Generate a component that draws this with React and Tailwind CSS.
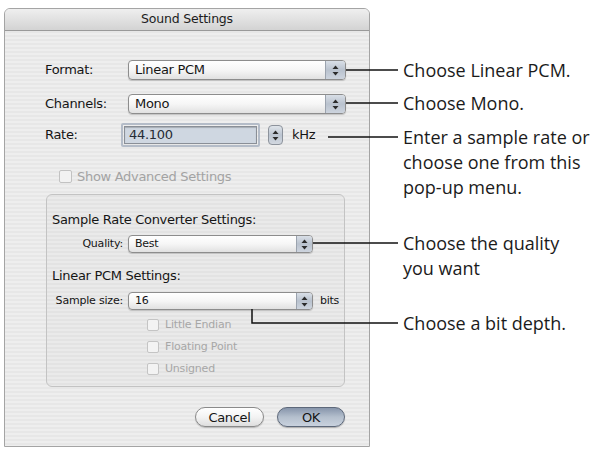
const dlgFont = { fontFamily: '"DejaVu Sans", "Liberation Sans", sans-serif' }

function Arrows({ size = "w-[7px] h-[11px]" }) {
  return (
    <svg viewBox="0 0 7 11" className={size}>
      <path d="M3.5 0.5 L6.5 4 L0.5 4 Z" fill="#2b2b2b" />
      <path d="M3.5 10.5 L6.5 7 L0.5 7 Z" fill="#2b2b2b" />
    </svg>
  )
}

function Popup({ value, className, stepW, textCls }) {
  return (
    <div
      className={`flex rounded-[4px] border border-[#8d8d8d] overflow-hidden bg-gradient-to-b from-white via-[#f6f6f6] to-[#e1e1e1] shadow-[0_1px_1px_rgba(0,0,0,0.18)] ${className}`}
    >
      <span className={`flex-1 flex items-center pl-[6px] text-[#151515] ${textCls}`}>{value}</span>
      <span
        className={`flex items-center justify-center border-l border-[#9ba3ae] bg-gradient-to-b from-[#d9dfe7] via-[#b9c2ce] to-[#cdd4de] ${stepW}`}
      >
        <Arrows />
      </span>
    </div>
  )
}

function DimCheck({ label }) {
  return (
    <div className="flex items-center gap-[6px]">
      <span className="w-[12px] h-[12px] rounded-[2px] border border-[#c4c4c4] bg-[#f3f3f3]" />
      <span className="text-[#a7a7a7] text-[11px] tracking-[-0.2px] leading-[14px]">{label}</span>
    </div>
  )
}

function Dialog() {
  return (
    <div
      style={dlgFont}
      className="ml-[4px] mt-[8px] w-[366px] h-[439px] flex flex-col border border-[#a4a4a4] rounded-t-[6px] overflow-hidden bg-[repeating-linear-gradient(180deg,#eeeeee_0px,#eeeeee_2px,#e7e7e7_2px,#e7e7e7_4px)]"
    >
      <div className="h-[22px] shrink-0 flex items-center justify-center border-b border-[#9a9a9a] bg-gradient-to-b from-[#efefef] to-[#d3d3d3] text-[12.5px] tracking-[-0.2px] text-[#1c1c1c]">
        Sound Settings
      </div>

      <div className="flex flex-col pl-[40px] pt-[29px] text-[13px] tracking-[-0.3px] text-[#151515]">
        <div className="flex items-center h-[20px]">
          <span className="w-[83px]">Format:</span>
          <Popup value="Linear PCM" className="w-[218px] h-[20px]" stepW="w-[20px]" textCls="text-[13px]" />
        </div>
        <div className="flex items-center h-[20px] mt-[14px]">
          <span className="w-[83px]">Channels:</span>
          <Popup value="Mono" className="w-[218px] h-[20px]" stepW="w-[20px]" textCls="text-[13px]" />
        </div>
        <div className="flex items-center h-[24px] mt-[9px]">
          <span className="w-[76px]">Rate:</span>
          <div className="w-[139px] h-[24px] rounded-[2px] border-2 border-[#b4bcc8] p-px">
            <div className="h-full flex items-center pl-[4px] border border-[#8a8f97] bg-[#cfd7e1] shadow-[inset_0_1px_1px_rgba(0,0,0,0.2)] text-[#262b34]">
              44.100
            </div>
          </div>
          <span className="ml-[8px] w-[15px] h-[20px] flex items-center justify-center rounded-[4px] border border-[#8d939c] bg-gradient-to-b from-[#dfe4ea] via-[#bcc5d1] to-[#d2d8e0]">
            <Arrows />
          </span>
          <span className="ml-[9px]">kHz</span>
        </div>

        <div className="flex items-center h-[13px] mt-[23px] ml-[14px] gap-[5px]">
          <span className="w-[13px] h-[13px] rounded-[2px] border border-[#c2c2c2] bg-[#f2f2f2]" />
          <span className="text-[#a3a3a3]">Show Advanced Settings</span>
        </div>

        <div className="mt-[11px] ml-[1px] w-[299px] h-[193px] rounded-[6px] border border-[#c3c3c3] bg-black/[0.015] flex flex-col pt-[17px]">
          <div className="pl-[5px] leading-[15px]">Sample Rate Converter Settings:</div>
          <div className="flex items-center h-[18px] mt-[8px]">
            <span className="w-[77px] text-right text-[11px] tracking-[-0.2px] pr-[1px]">Quality:</span>
            <Popup value="Best" className="ml-[4px] w-[185px] h-[18px]" stepW="w-[16px]" textCls="text-[11px]" />
          </div>
          <div className="pl-[5px] leading-[15px] mt-[15px]">Linear PCM Settings:</div>
          <div className="flex items-center h-[18px] mt-[9px]">
            <span className="w-[77px] text-right text-[11px] tracking-[-0.2px] pr-[1px]">Sample size:</span>
            <Popup value="16" className="ml-[4px] w-[185px] h-[18px]" stepW="w-[16px]" textCls="text-[11px]" />
            <span className="ml-[7px] text-[11px]">bits</span>
          </div>
          <div className="flex flex-col gap-[8px] mt-[8px] ml-[100px]">
            <DimCheck label="Little Endian" />
            <DimCheck label="Floating Point" />
            <DimCheck label="Unsigned" />
          </div>
        </div>

        <div className="flex justify-end gap-[13px] mt-[20px] mr-[24px]">
          <button className="w-[69px] h-[20px] rounded-full border border-[#8a8a8a] bg-gradient-to-b from-white via-[#f3f3f3] to-[#dedede] text-[13px] text-[#151515] shadow-[0_1px_1px_rgba(0,0,0,0.2)]">
            Cancel
          </button>
          <button className="w-[68px] h-[20px] rounded-full border border-[#5d687a] bg-gradient-to-b from-[#8795ab] via-[#b4bfcd] to-[#c9d2de] text-[13px] text-[#151515] shadow-[0_1px_1px_rgba(0,0,0,0.25)]">
            OK
          </button>
        </div>
      </div>
    </div>
  )
}

export default function App() {
  return (
    <div className="relative w-[593px] h-[451px] bg-white overflow-hidden flex">
      <Dialog />

      <div
        className="ml-[33px] pt-[58px] flex flex-col text-[18px] leading-[25px] text-[#1b1b1b] whitespace-nowrap"
        style={{ fontFamily: '"Open Sans", "Noto Sans", sans-serif' }}
      >
        <p>Choose Linear PCM.</p>
        <p className="mt-[8px]">Choose Mono.</p>
        <p className="mt-[9px]">
          Enter a sample rate or
          <br />
          choose one from this
          <br />
          pop-up menu.
        </p>
        <p className="mt-[31px]">
          Choose the quality
          <br />
          you want
        </p>
        <p className="mt-[30px]">Choose a bit depth.</p>
      </div>

      <svg className="absolute inset-0 pointer-events-none" width="593" height="451">
        <g stroke="#111" strokeWidth="1.5" fill="none">
          <path d="M346 70 H398" />
          <path d="M346 103 H398" />
          <path d="M328 137 H398" />
          <path d="M313 243 H398" />
          <path d="M252 309 V323 H398" />
        </g>
      </svg>
    </div>
  )
}
